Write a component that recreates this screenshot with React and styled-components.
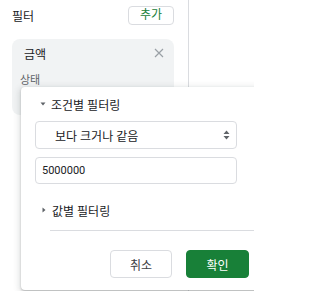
import React from "react";
import styled, { createGlobalStyle } from "styled-components";

const GlobalStyle = createGlobalStyle`
  html, body {
    margin: 0;
    padding: 0;
    background: #ffffff;
    overflow: hidden;
  }
  body {
    font-family: Roboto, "Noto Sans CJK KR", sans-serif;
    color: #202124;
  }
`;

const Page = styled.div`
  position: relative;
  width: 254px;
  height: 291px;
  overflow: hidden;
`;

// Left filter sidebar
const Sidebar = styled.aside`
  box-sizing: border-box;
  width: 189px;
  height: 291px;
  border-right: 1px solid #dadce0;
  display: flex;
  flex-direction: column;
`;

const SidebarHeader = styled.div`
  display: flex;
  align-items: center;
  justify-content: space-between;
  padding: 6px 14px 0 12px;
  height: 19px;
`;

const Title = styled.span`
  font-size: 12px;
  color: #202124;
  line-height: 19px;
  padding-top: 4px;
`;

const AddButton = styled.button`
  box-sizing: border-box;
  width: 46px;
  height: 19px;
  padding: 0;
  background: #ffffff;
  border: 1px solid #dadce0;
  border-radius: 4px;
  color: #188038;
  font-family: inherit;
  font-size: 12px;
  line-height: 17px;
`;

const FilterCard = styled.div`
  box-sizing: border-box;
  margin: 14px 14px 0 12px;
  height: 76px;
  background: #f1f3f4;
  border-radius: 8px;
  padding: 6px 10px 0 8px;
`;

const CardHead = styled.div`
  display: flex;
  align-items: center;
  justify-content: space-between;
  height: 16px;
  padding-left: 4px;
`;

const CardTitle = styled.span`
  font-size: 12px;
  color: #202124;
`;

const CardLabel = styled.div`
  margin-top: 10px;
  font-size: 11px;
  color: #5f6368;
`;

// Floating filter popup
const Popup = styled.div`
  box-sizing: border-box;
  position: absolute;
  left: 21px;
  top: 87px;
  width: 245px;
  height: 203px;
  background: #ffffff;
  border-radius: 4px;
  box-shadow: 0 1px 2px rgba(60, 64, 67, 0.3), 0 2px 6px 2px rgba(60, 64, 67, 0.15);
  display: flex;
  flex-direction: column;
  padding: 9px 0 0 14px;
`;

const Section = styled.div`
  display: flex;
  align-items: center;
  gap: 5px;
  height: 16px;
  padding-left: ${({ $indent }) => $indent}px;
  margin-top: ${({ $top }) => $top}px;
  font-size: 12px;
  color: #202124;
`;

const Field = styled.div`
  box-sizing: border-box;
  display: flex;
  align-items: center;
  justify-content: space-between;
  width: 202px;
  height: ${({ $h }) => $h}px;
  margin-top: ${({ $top }) => $top}px;
  border: 1px solid #dadce0;
  border-radius: 4px;
  padding: 0 6px 0 ${({ $pad }) => $pad}px;
  font-size: ${({ $size }) => $size}px;
  color: #202124;
`;

const Divider = styled.div`
  height: 1px;
  background: #dadce0;
  margin: 12px 0 0 15px;
`;

const Actions = styled.div`
  display: flex;
  gap: 14px;
  margin: 19px 0 0 75px;
`;

const ActionButton = styled.button`
  box-sizing: border-box;
  width: ${({ $w }) => $w}px;
  height: 28px;
  padding: 0;
  border-radius: 4px;
  font-family: inherit;
  font-size: 12px;
  border: 1px solid ${({ $primary }) => ($primary ? "#188038" : "#dadce0")};
  background: ${({ $primary }) => ($primary ? "#188038" : "#ffffff")};
  color: ${({ $primary }) => ($primary ? "#ffffff" : "#3c4043")};
`;

const CloseIcon = () => (
  <svg width="10" height="10" viewBox="0 0 10 10">
    <path d="M1 1L9 9M9 1L1 9" stroke="#9aa0a6" strokeWidth="1.2" />
  </svg>
);

const Caret = ({ open }) => (
  <svg width="6" height="6" viewBox="0 0 6 6">
    {open ? (
      <path d="M0.5 1.5H5.5L3 4.5Z" fill="#5f6368" />
    ) : (
      <path d="M1.5 0.5V5.5L4.5 3Z" fill="#5f6368" />
    )}
  </svg>
);

const UpDown = () => (
  <svg width="7" height="10" viewBox="0 0 7 10">
    <path d="M0.5 4L3.5 0.5L6.5 4Z M0.5 6L3.5 9.5L6.5 6Z" fill="#5f6368" />
  </svg>
);

export default function App() {
  return (
    <>
      <GlobalStyle />
      <Page>
        <Sidebar>
          <SidebarHeader>
            <Title>필터</Title>
            <AddButton>추가</AddButton>
          </SidebarHeader>
          <FilterCard>
            <CardHead>
              <CardTitle>금액</CardTitle>
              <CloseIcon />
            </CardHead>
            <CardLabel>상태</CardLabel>
          </FilterCard>
        </Sidebar>

        <Popup>
          <Section $indent={5} $top={0}>
            <Caret open />
            조건별 필터링
          </Section>
          <Field $h={28} $top={9} $pad={19} $size={12}>
            <span>보다 크거나 같음</span>
            <UpDown />
          </Field>
          <Field $h={27} $top={8} $pad={6} $size={11}>
            5000000
          </Field>
          <Section $indent={6} $top={18}>
            <Caret />
            값별 필터링
          </Section>
          <Divider />
          <Actions>
            <ActionButton $w={62}>취소</ActionButton>
            <ActionButton $w={63} $primary>
              확인
            </ActionButton>
          </Actions>
        </Popup>
      </Page>
    </>
  );
}
